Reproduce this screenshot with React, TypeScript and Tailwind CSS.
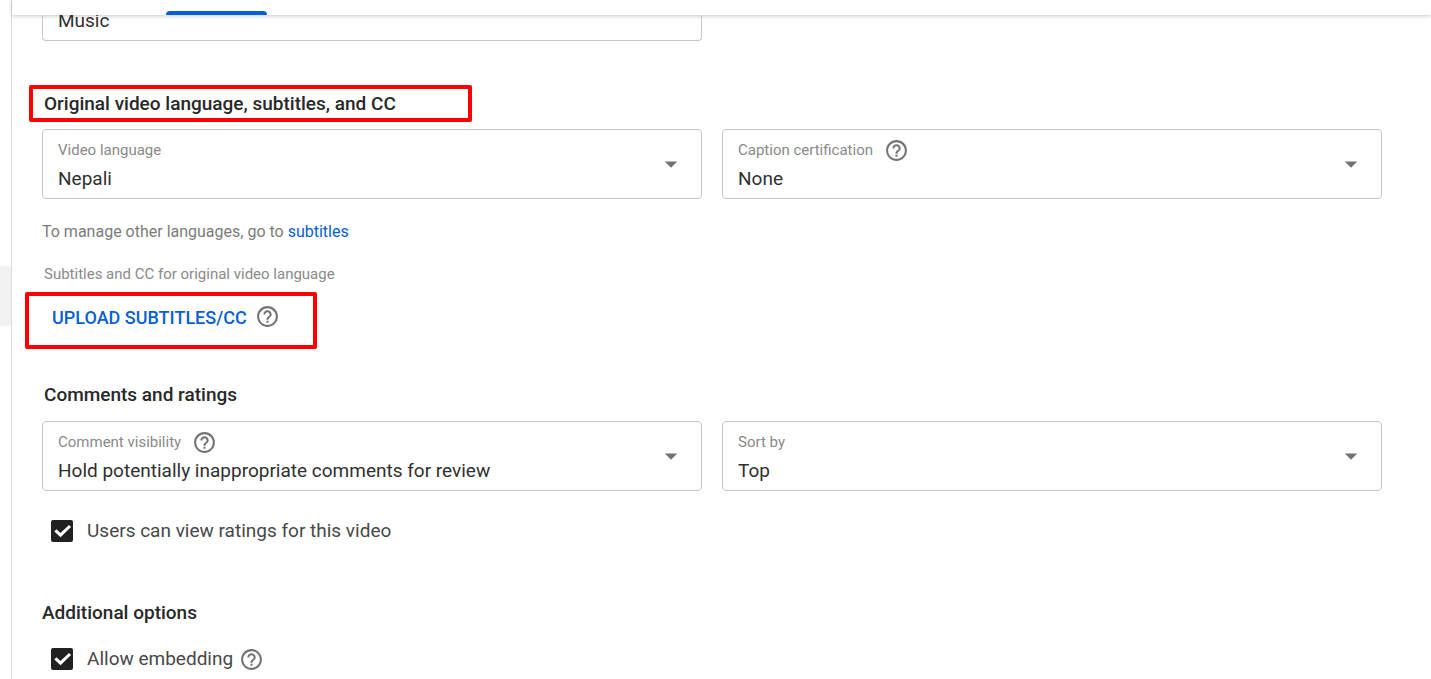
import { useState } from "react";
import type { ReactNode } from "react";
import { MdArrowDropDown, MdHelpOutline } from "react-icons/md";

interface SelectFieldProps {
  id: string;
  label: string;
  options: string[];
  help?: boolean;
}

function HelpButton({ topic }: { topic: string }) {
  return (
    <button type="button" aria-label={`Help: ${topic}`} className="shrink-0 text-[#737373]">
      <MdHelpOutline className="size-[25px]" />
    </button>
  );
}

function SelectField({ id, label, options, help }: SelectFieldProps) {
  return (
    <div className="relative rounded border border-[#c6c6c6] px-[15px] pt-2 pb-0.5">
      <div className="flex h-6 items-center gap-[11px]">
        <label htmlFor={id} className="text-[15px] text-[#8a8a8a]">
          {label}
        </label>
        {help && <HelpButton topic={label} />}
      </div>
      <select id={id} className="block h-[34px] w-full appearance-none bg-transparent text-[19px] text-[#303030]">
        {options.map((option) => (
          <option key={option}>{option}</option>
        ))}
      </select>
      <MdArrowDropDown className="pointer-events-none absolute top-1/2 right-[15px] size-[30px] -translate-y-1/2 text-[#737373]" />
    </div>
  );
}

function CheckRow({ id, label, children }: { id: string; label: string; children?: ReactNode }) {
  const [checked, setChecked] = useState(true);

  return (
    <div className="flex h-6 items-center pl-[9px]">
      <span className="grid size-[22px] shrink-0 place-items-center">
        <input
          id={id}
          type="checkbox"
          checked={checked}
          onChange={(e) => setChecked(e.target.checked)}
          className="col-start-1 row-start-1 size-[22px] appearance-none rounded-xs border-2 border-[#212121] checked:bg-[#212121]"
        />
        {checked && (
          <svg viewBox="0 0 22 22" className="pointer-events-none col-start-1 row-start-1 size-[22px]" fill="none">
            <path d="M4.4 10.4 9.5 15.2 19 6" stroke="#fff" strokeWidth="3" />
          </svg>
        )}
      </span>
      <label htmlFor={id} className="mr-1.5 ml-3.5 text-[19px] text-[#484848]">
        {label}
      </label>
      {children}
    </div>
  );
}

export default function App() {
  return (
    <div className="flex min-h-screen bg-white font-[Roboto,sans-serif]">
      {/* Edge of the side navigation with the selected item */}
      <nav className="w-3 shrink-0 border-r border-[#dcdcdc] pt-[266px]">
        <div className="h-[60px] bg-[#f2f2f2]" />
      </nav>

      <main className="min-w-0 flex-1">
        <header className="flex h-[15px] items-end bg-white pl-[154px] shadow-[0_1px_4px_rgba(0,0,0,0.22)]">
          <div className="h-1 w-[101px] rounded-t bg-[#065fd4]" />
        </header>

        <div className="pr-[49px] pl-[30px]">
          {/* Category field, scrolled under the header */}
          <div className="grid grid-cols-2 gap-5">
            <div className="flex h-[26px] items-center overflow-hidden rounded-b border-x border-b border-[#c6c6c6] px-[15px]">
              <select aria-label="Category" className="-mt-3 block h-8 w-full appearance-none bg-transparent text-[19px] text-[#303030]">
                <option>Music</option>
              </select>
            </div>
          </div>

          <section>
            <div className="mt-11 -ml-[13px] flex h-[37px] w-[443px] items-center rounded-xs border-4 border-[#ff0000] pl-[11px]">
              <h2 className="text-[19px] leading-6 font-medium text-[#282828]">
                Original video language, subtitles, and CC
              </h2>
            </div>
            <div className="mt-[7px] grid grid-cols-2 gap-5">
              <SelectField id="video-language" label="Video language" options={["Nepali", "English", "Hindi"]} />
              <SelectField id="caption-certification" label="Caption certification" options={["None"]} help />
            </div>
            <p className="mt-[21px] text-[16px] leading-6 text-[#7c7c7c]">
              To manage other languages, go to{" "}
              <a href="#subtitles" className="text-[#065fd4]">
                subtitles
              </a>
            </p>
            <p className="mt-[19px] pl-0.5 text-[15px] leading-[22px] text-[#8a8a8a]">
              Subtitles and CC for original video language
            </p>
            <div className="mt-[7px] -ml-[17px] flex h-[57px] w-[292px] items-start gap-2 rounded-xs border-4 border-[#ff0000] pl-[23px]">
              <button type="button" className="h-10 pt-0.5 text-[18px] font-medium text-[#065fd4] uppercase">
                Upload subtitles/CC
              </button>
              <span className="flex h-10 items-center">
                <HelpButton topic="Upload subtitles" />
              </span>
            </div>
          </section>

          <section className="mt-[34px]">
            <h2 className="pl-0.5 text-[19px] leading-6 font-medium text-[#282828]">Comments and ratings</h2>
            <div className="mt-3.5 grid grid-cols-2 gap-5">
              <SelectField
                id="comment-visibility"
                label="Comment visibility"
                options={["Hold potentially inappropriate comments for review", "Allow all comments"]}
                help
              />
              <SelectField id="sort-by" label="Sort by" options={["Top", "Newest"]} />
            </div>
            <div className="mt-7">
              <CheckRow id="view-ratings" label="Users can view ratings for this video" />
            </div>
          </section>

          <section className="mt-[58px]">
            <h2 className="text-[19px] leading-6 font-medium text-[#282828]">Additional options</h2>
            <div className="mt-[22px]">
              <CheckRow id="allow-embedding" label="Allow embedding">
                <HelpButton topic="Allow embedding" />
              </CheckRow>
            </div>
          </section>
        </div>
      </main>
    </div>
  );
}
